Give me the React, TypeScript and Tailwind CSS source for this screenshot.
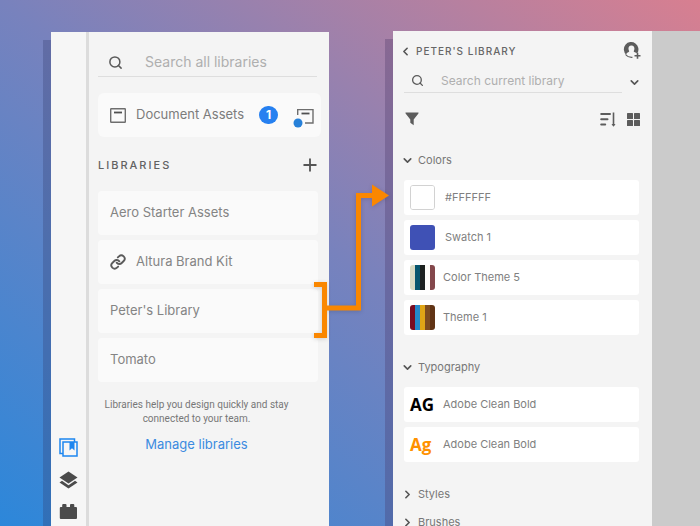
import React from "react";
import { ChevronDown, ChevronLeft, ChevronRight, Link, Plus, Search } from "lucide-react";

const libraries = [
  { name: "Aero Starter Assets" },
  { name: "Altura Brand Kit", linked: true },
  { name: "Peter's Library", selected: true },
  { name: "Tomato" },
];

function LibrariesIcon() {
  return (
    <svg width="19" height="19" viewBox="0 0 19 19" fill="none" stroke="#1d86f0" strokeWidth="1.5">
      <path d="M4 15.500H1V1h14.500v3" />
      <rect x="4" y="4" width="14" height="14" />
      <path d="M10.500 4h5v8.500L13 10.200l-2.500 2.300z" fill="#1d86f0" stroke="none" />
    </svg>
  );
}

function LayersIcon() {
  return (
    <svg width="19" height="18" viewBox="0 0 19 18" fill="#4b4b4b">
      <path d="M9.500 0.500L18.500 6.500L9.500 12.500L0.500 6.500z" />
      <path d="M3 9.800L0.500 11.500L9.500 17.500L18.500 11.500L16 9.800L9.500 14.200z" />
    </svg>
  );
}

function BrickIcon() {
  return (
    <svg width="19" height="17" viewBox="0 0 19 17" fill="#4b4b4b">
      <path d="M1.800 4H3.200V2Q3.200 1 4.200 1H6.500Q7.500 1 7.500 2V4H11V2Q11 1 12 1H14.300Q15.300 1 15.300 2V4H17Q18 4 18 5V15Q18 16 17 16H1.800Q0.800 16 0.800 15V5Q0.800 4 1.800 4z" />
    </svg>
  );
}

function DocumentIcon() {
  return (
    <svg width="16" height="15" viewBox="0 0 16 15" fill="none" stroke="#6e6e6e">
      <rect x="0.700" y="0.700" width="14.600" height="13.600" rx="0.500" strokeWidth="1.400" />
      <path d="M4 4.500h8" stroke="#505050" strokeWidth="1.800" />
    </svg>
  );
}

function DocumentLinkedIcon() {
  return (
    <svg width="21" height="25" viewBox="0 -5 21 25" fill="none">
      <path d="M4.700 7V1.600H20V15H12" stroke="#6e6e6e" strokeWidth="1.400" />
      <path d="M8.500 5.500h8" stroke="#505050" strokeWidth="1.800" />
      <circle cx="5" cy="15" r="4.500" fill="#2680d9" />
    </svg>
  );
}

function InviteIcon() {
  return (
    <svg width="18" height="18" viewBox="0 0 18 18" fill="none">
      <path
        d="M3.300 12.800A7.300 7.300 0 1 1 14.300 11.300L11.200 9.900C10.600 9.600 10.600 9.200 10.900 8.700C11.700 7.400 12 3.600 8.400 3.600C4.900 3.600 5.200 7.400 6 8.700C6.300 9.200 6.300 9.600 5.700 9.900C4.300 10.600 3.300 11.200 3.300 12.800z"
        fill="#5c5c5c"
      />
      <path d="M2.500 12.500Q5 15.600 9.500 15.300" stroke="#5c5c5c" strokeWidth="1.100" />
      <path d="M14.500 10.700v6M11.500 13.700h6" stroke="#5c5c5c" strokeWidth="1.600" />
    </svg>
  );
}

function FilterIcon() {
  return (
    <svg width="14" height="14" viewBox="0 0 14 14" fill="#5c5c5c">
      <path d="M0.700 0.500H13.300Q13.800 0.800 13.400 1.400L8.700 7.400V13.200L5.300 10.700V7.400L0.600 1.400Q0.200 0.800 0.700 0.500z" />
    </svg>
  );
}

function SortIcon() {
  return (
    <svg width="16" height="15" viewBox="0 0 16 15" fill="none" stroke="#5c5c5c">
      <path d="M1.200 2h8.800M1.200 7.200h6.300M1.200 12.500h4" strokeWidth="2" strokeLinecap="round" />
      <path d="M13.500 0.500v13" strokeWidth="1.600" />
      <path d="M11.500 12L13.500 14.800L15.500 12z" fill="#5c5c5c" stroke="none" />
    </svg>
  );
}

function GridIcon() {
  return (
    <svg width="13" height="13" viewBox="0 0 13 13" fill="#5c5c5c">
      <rect width="6" height="6" rx="0.500" />
      <rect x="7" width="6" height="6" rx="0.500" />
      <rect y="7" width="6" height="6" rx="0.500" />
      <rect x="7" y="7" width="6" height="6" rx="0.500" />
    </svg>
  );
}

// bracket on the selected library, pointing across to its own panel
function Pointer() {
  return (
    <svg
      className="pointer-events-none absolute -bottom-[7px] left-full z-10 -ml-1 drop-shadow-sm"
      width="76"
      height="158"
      viewBox="0 0 76 158"
      fill="none"
    >
      <path d="M0 102.500H10.500V153.500H0M12 126H44.500V13.500H59" stroke="#fa8700" strokeWidth="5" />
      <path d="M58 2.500L75 13.500L58 24.500z" fill="#fa8700" />
    </svg>
  );
}

function LibrariesPanel() {
  return (
    <section className="mt-px flex min-w-0 flex-[278] bg-[#f4f4f4] shadow-[-8px_8px_0_rgba(50,60,110,0.3)]">
      <nav className="flex w-[35px] flex-col items-center justify-end gap-[14px] bg-[#f6f6f6] pb-[6px]">
        <button aria-label="Libraries"><LibrariesIcon /></button>
        <button aria-label="Layers"><LayersIcon /></button>
        <button aria-label="Plugins"><BrickIcon /></button>
      </nav>
      <div className="min-w-0 flex-1 border-l-[3px] border-[#dcdcdc] pl-[9px] pr-2">
        <label className="mr-1 flex h-[45px] items-center gap-[22px] border-b border-[#dedede] pl-[10px] pt-4">
          <Search size={15} strokeWidth={2.4} className="shrink-0 text-[#5a5a5a]" />
          <input
            aria-label="Search all libraries"
            placeholder="Search all libraries"
            className="w-full min-w-0 bg-transparent text-[14px] leading-5 outline-none placeholder:text-[#afafaf]"
          />
        </label>

        <button className="mt-4 flex h-11 w-full items-center rounded-md bg-[#fafafa] pl-3 pr-[7px]">
          <DocumentIcon />
          <span className="ml-[10px] whitespace-nowrap text-[13px] text-[#7c7c7c]">Document Assets</span>
          <span className="ml-auto flex h-[18px] w-[19px] items-center justify-center rounded-full bg-[#2680f0] text-[12px] font-bold text-white">
            1
          </span>
          <span className="ml-[15px]"><DocumentLinkedIcon /></span>
        </button>

        <div className="mr-1 mt-[18px] flex h-5 items-center justify-between">
          <h2 className="text-[11px] font-medium tracking-[2px] text-[#626262]">LIBRARIES</h2>
          <button aria-label="Add library">
            <Plus size={20} strokeWidth={2.2} className="-mr-[3px] text-[#555]" />
          </button>
        </div>

        <ul className="mr-[3px] mt-4 flex flex-col gap-[5px]">
          {libraries.map((library) => (
            <li key={library.name} className="relative">
              <button className="flex h-11 w-full items-center gap-[10px] rounded bg-[#fafafa] px-3 text-[13px] text-[#848484]">
                {library.linked && <Link size={16} strokeWidth={2.8} className="text-[#5a5a5a]" />}
                {library.name}
              </button>
              {library.selected && <Pointer />}
            </li>
          ))}
        </ul>

        <div className="mr-[26px] mt-4 text-center">
          <p className="whitespace-nowrap font-[Roboto,sans-serif] text-[10px] leading-[14px] text-[#777]">
            Libraries help you design quickly and stay
            <br />
            connected to your team.
          </p>
          <a href="#" className="mt-2 block text-[13px] leading-5 text-[#3b8be0]">
            Manage libraries
          </a>
        </div>
      </div>
    </section>
  );
}

const colors = [
  { name: "#FFFFFF", stripes: ["bg-white"], solid: true, outline: true },
  { name: "Swatch 1", stripes: ["bg-[#3f51b5]"], solid: true },
  { name: "Color Theme 5", stripes: ["bg-[#d9dbc5]", "bg-[#07566f]", "bg-[#1d211f]", "bg-[#fdfcf8]", "bg-[#84484c]"] },
  { name: "Theme 1", stripes: ["bg-[#780c22]", "bg-[#2488cb]", "bg-[#dfa516]", "bg-[#7d4c20]", "bg-[#613415]"] },
];

const fonts = [
  { sample: "AG", color: "text-black" },
  { sample: "Ag", color: "text-[#ff9100]" },
];

function SectionButton({ title, open }: { title: string; open?: boolean }) {
  return (
    <button aria-expanded={!!open} className="flex h-5 items-center gap-1 text-[11px] text-[#777]">
      {open ? (
        <ChevronDown size={13} strokeWidth={3} className="-ml-[3px] text-[#555]" />
      ) : (
        <ChevronRight size={13} strokeWidth={3} className="-ml-[3px] text-[#555]" />
      )}
      {title}
    </button>
  );
}

function LibraryPanel() {
  return (
    <section className="min-w-0 flex-1 bg-[#f4f4f4] pl-[11px] pr-[13px]">
      <header className="flex h-10 items-center justify-between">
        <button className="flex items-center gap-1 whitespace-nowrap text-[10px] font-medium tracking-[1px] text-[#666]">
          <ChevronLeft size={13} strokeWidth={3} className="-ml-[5px] text-[#555]" />
          PETER'S LIBRARY
        </button>
        <button aria-label="Invite people" className="-mr-[2px]"><InviteIcon /></button>
      </header>

      <div className="flex items-center justify-between">
        <label className="flex h-[22px] min-w-0 flex-1 items-center gap-[17px] border-b border-[#dedede] pb-[2px] pl-[7px]">
          <Search size={13} strokeWidth={2.4} className="shrink-0 text-[#5a5a5a]" />
          <input
            aria-label="Search current library"
            placeholder="Search current library"
            className="w-full min-w-0 bg-transparent text-[12px] leading-4 outline-none placeholder:text-[#afafaf]"
          />
        </label>
        <button aria-label="Search options" className="-mr-[2px] ml-[6px]">
          <ChevronDown size={13} strokeWidth={3} className="text-[#555]" />
        </button>
      </div>

      <div className="-mr-px mt-4 flex h-5 items-center">
        <button aria-label="Filter" className="ml-px"><FilterIcon /></button>
        <button aria-label="Sort" className="ml-auto"><SortIcon /></button>
        <button aria-label="Grid view" className="ml-[11px]"><GridIcon /></button>
      </div>

      <div className="mt-[21px]">
        <SectionButton title="Colors" open />
        <ul className="mt-[10px] flex flex-col gap-[5px]">
          {colors.map((color) => (
            <li
              key={color.name}
              className={`flex h-[35px] items-center rounded-[3px] bg-white pl-[6px] text-[11px] text-[#808080] ${color.solid ? "gap-[10px]" : "gap-2"}`}
            >
              <span
                className={`flex size-[25px] overflow-hidden rounded-[3px] ${color.outline ? "border border-[#d2d2d2]" : ""}`}
              >
                {color.stripes.map((stripe) => (
                  <span key={stripe} className={`flex-1 ${stripe}`} />
                ))}
              </span>
              {color.name}
            </li>
          ))}
        </ul>
      </div>

      <div className="mt-[22px]">
        <SectionButton title="Typography" open />
        <ul className="mt-[10px] flex flex-col gap-[5px]">
          {fonts.map((font) => (
            <li
              key={font.sample}
              className="flex h-[35px] items-center gap-2 rounded-[3px] bg-white pl-[6px] text-[11px] text-[#808080]"
            >
              <span className={`w-[25px] text-[17px] leading-6 font-bold font-['Open_Sans',sans-serif] ${font.color}`}>
                {font.sample}
              </span>
              Adobe Clean Bold
            </li>
          ))}
        </ul>
      </div>

      <div className="mt-[22px] flex flex-col gap-2">
        <SectionButton title="Styles" />
        <SectionButton title="Brushes" />
      </div>
    </section>
  );
}

export default function App() {
  return (
    <main className="flex h-screen gap-16 overflow-hidden bg-[linear-gradient(to_top_right,#2c87da,#7882bd_50%,#d87f90)] pl-[51px] pt-[31px] font-[Inter,sans-serif]">
      <LibrariesPanel />
      <div className="flex min-w-0 flex-[307] shadow-[-8px_8px_0_rgba(70,50,100,0.3)]">
        <LibraryPanel />
        <div className="w-12 bg-[#cbcbcb]" />
      </div>
    </main>
  );
}
